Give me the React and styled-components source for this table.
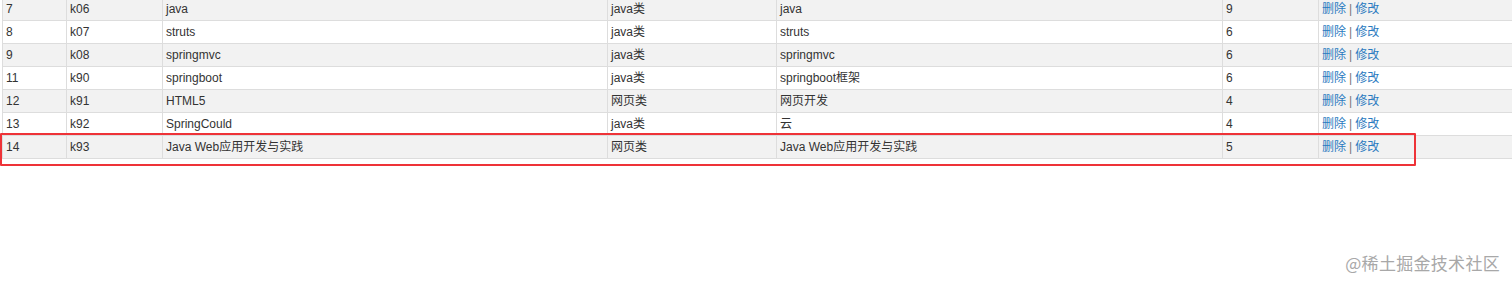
import styled, { createGlobalStyle } from "styled-components";

const GlobalStyle = createGlobalStyle`
  html, body {
    margin: 0;
    padding: 0;
    background: #ffffff;
  }
  body {
    font-family: "Liberation Sans", Arial, "Noto Sans CJK SC", sans-serif;
  }
`;

const rows = [
  { id: 7, code: "k06", name: "java", type: "java类", desc: "java", num: 9 },
  { id: 8, code: "k07", name: "struts", type: "java类", desc: "struts", num: 6 },
  { id: 9, code: "k08", name: "springmvc", type: "java类", desc: "springmvc", num: 6 },
  { id: 11, code: "k90", name: "springboot", type: "java类", desc: "springboot框架", num: 6 },
  { id: 12, code: "k91", name: "HTML5", type: "网页类", desc: "网页开发", num: 4 },
  { id: 13, code: "k92", name: "SpringCould", type: "java类", desc: "云", num: 4 },
  { id: 14, code: "k93", name: "Java Web应用开发与实践", type: "网页类", desc: "Java Web应用开发与实践", num: 5 },
];

const widths = [64, 96, 445, 169, 446, 96, 300];

const Page = styled.div`
  position: relative;
  width: 1512px;
  height: 284px;
  overflow: hidden;
`;

const Table = styled.table`
  border-collapse: collapse;
  table-layout: fixed;
  width: 1616px;
  margin: -3px 0 0 2px;
  font-size: 12px;
  color: #333333;
`;

const Row = styled.tr`
  background: ${(p) => (p.$striped ? "#f2f2f2" : "#ffffff")};
`;

const Cell = styled.td`
  height: 22px;
  padding: 0 3px;
  border: 1px solid #dddddd;
  line-height: 22px;
  white-space: nowrap;
  overflow: hidden;
`;

const Action = styled.a`
  color: #2a7ac0;
  text-decoration: none;
`;

const Sep = styled.span`
  color: #777777;
  margin: 0 3px;
`;

const Highlight = styled.div`
  position: absolute;
  left: 0;
  top: 133px;
  width: 1412px;
  height: 29px;
  border: 2.5px solid #ee3338;
  border-radius: 1px;
  pointer-events: none;
`;

const Watermark = styled.div`
  position: absolute;
  right: 12px;
  top: 250px;
  font-family: "Noto Sans CJK SC", "Liberation Sans", sans-serif;
  font-size: 17px;
  color: #a8a8a8;
  letter-spacing: 0.3px;
`;

export default function App() {
  return (
    <Page>
      <GlobalStyle />
      <Table>
        <colgroup>
          {widths.map((w, i) => (
            <col key={i} style={{ width: w }} />
          ))}
        </colgroup>
        <tbody>
          {rows.map((r, i) => (
            <Row key={r.id} $striped={i % 2 === 0}>
              <Cell>{r.id}</Cell>
              <Cell>{r.code}</Cell>
              <Cell>{r.name}</Cell>
              <Cell>{r.type}</Cell>
              <Cell>{r.desc}</Cell>
              <Cell>{r.num}</Cell>
              <Cell>
                <Action href="#">删除</Action>
                <Sep>|</Sep>
                <Action href="#">修改</Action>
              </Cell>
            </Row>
          ))}
        </tbody>
      </Table>
      <Highlight />
      <Watermark>@稀土掘金技术社区</Watermark>
    </Page>
  );
}
